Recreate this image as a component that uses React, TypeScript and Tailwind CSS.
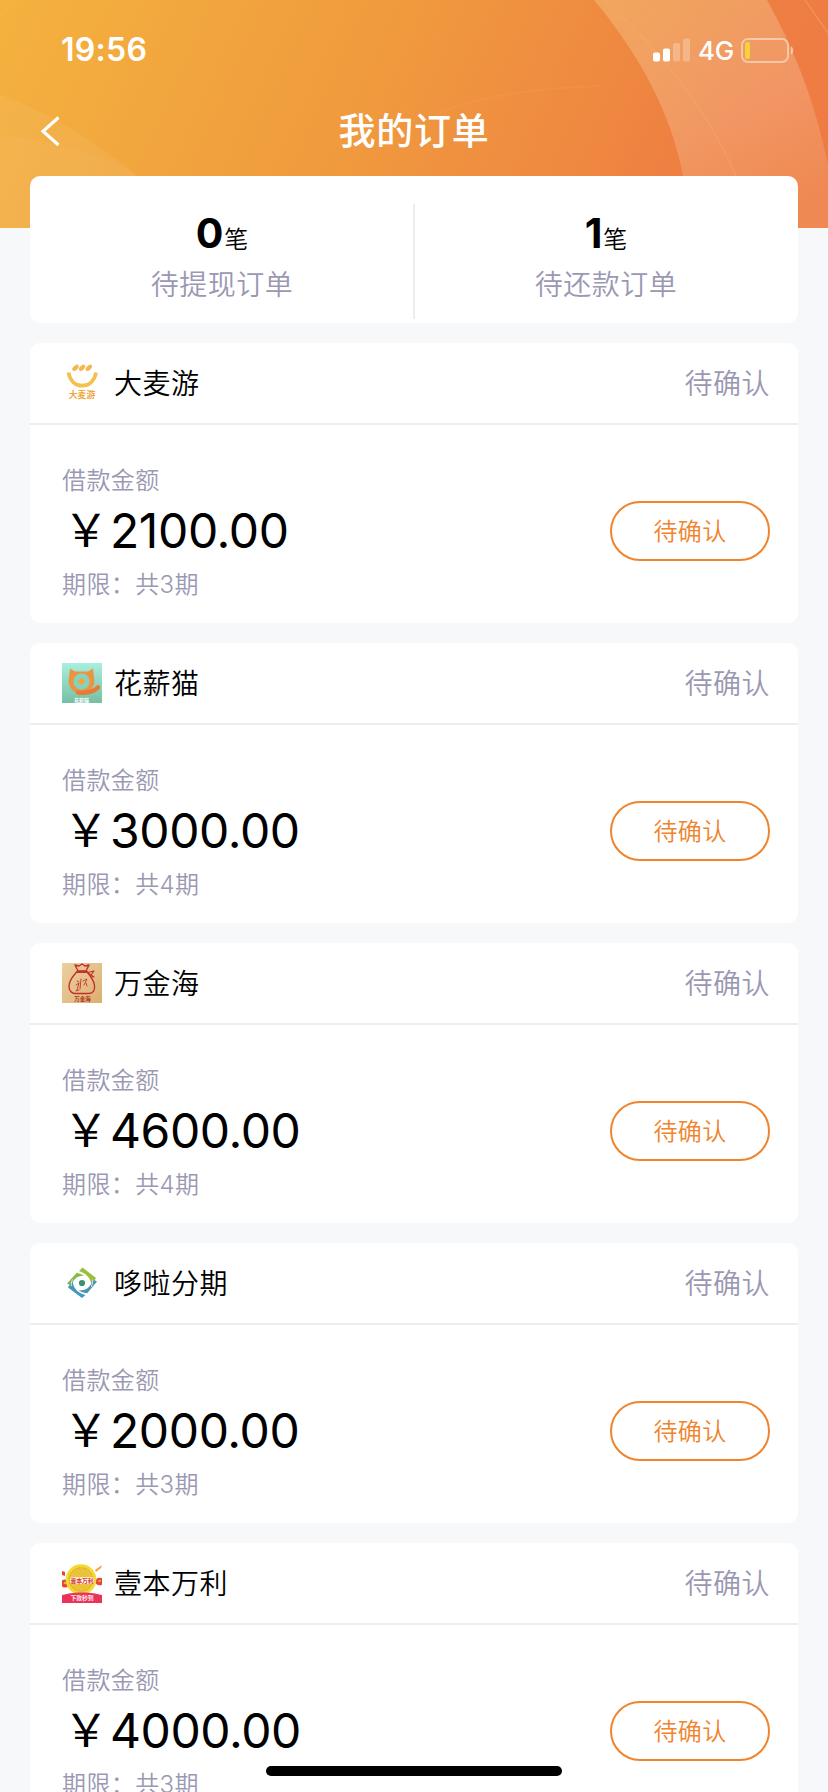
import React from 'react';

interface Order {
    id: number;
    name: string;
    amount: string;
    periods: number;
    logo: React.ReactNode;
}

const DamaiLogo = () => (
    <svg viewBox="0 0 40 40" className="w-10 h-10">
        <g fill="#f2b84b">
            <ellipse cx="13.5" cy="4.8" rx="3.8" ry="2.2" transform="rotate(-42 13.5 4.8)" />
            <ellipse cx="20" cy="4.8" rx="3.8" ry="2.2" transform="rotate(-42 20 4.8)" />
            <ellipse cx="26.800" cy="4.8" rx="3.8" ry="2.2" transform="rotate(-42 26.8 4.8)" />
        </g>
        <path d="M6.5 9.5C8 18 13.5 22.600 20.2 22.600S32.500 18 34 9.500" fill="none" stroke="#f2c14f" strokeWidth="3.800" />
        <text x="20" y="35" textAnchor="middle" fontSize="8.8" fontWeight="700" fill="#efa73a">大麦游</text>
    </svg>
);

const CatLogo = () => (
    <svg viewBox="0 0 40 40" className="w-10 h-10">
        <defs>
            <linearGradient id="cat-bg" x1="0" y1="0" x2="0" y2="1">
                <stop offset="0" stopColor="#a9efdf" />
                <stop offset="1" stopColor="#76bfa2" />
            </linearGradient>
        </defs>
        <rect width="40" height="40" fill="url(#cat-bg)" />
        <path d="M8 5.500l5 3h13l5-3 1 9c1 4 0 9-3 12-4 5-15 5-19 0-3-3-4-8-3-12z" fill="#eb9340" />
        <path d="M16 29.500c9 1 15 0 20-5" stroke="#ea7a38" strokeWidth="4.500" strokeLinecap="round" fill="none" />
        <circle cx="19.500" cy="18.500" r="8.500" fill="#86d3bd" />
        <circle cx="19.500" cy="18.500" r="8.500" fill="none" stroke="#dba05a" strokeWidth="1.200" />
        <path d="M19.500 14.500l2 2.300 2.500 1.700-2.500 1.400-2 2.600-2-2.600-2.500-1.400 2.500-1.700z" fill="#f2a53c" />
        <text x="19.500" y="38.500" textAnchor="middle" fontSize="5" fontWeight="700" fill="#ffffff">花薪猫</text>
    </svg>
);

const BagLogo = () => (
    <svg viewBox="0 0 40 40" className="w-10 h-10">
        <defs>
            <linearGradient id="bag-bg" x1="0" y1="0" x2="1" y2="1">
                <stop offset="0" stopColor="#ecd09e" />
                <stop offset=".55" stopColor="#e4bf88" />
                <stop offset="1" stopColor="#dcae6c" />
            </linearGradient>
        </defs>
        <rect width="40" height="40" fill="url(#bag-bg)" />
        <g fill="none" stroke="#c4302b" strokeWidth="1.400" strokeLinecap="round" strokeLinejoin="round">
            <path d="M16 8l-3-6 4 1 3-2 3 2 4-1-3 6z" />
            <path d="M15 8.500c-3 4-8 8-8 15 0 4 2.500 7 6 7h14c4 0 6-3 5.500-8C32 17 28 13 25 8.500z" />
            <path d="M15 9.500h11l6-1.500-3 4 3 2M26 10l5 4" strokeWidth="1.100" />
            <path d="M15 18l2 1M14 22l3-2-2 7M19 16l-1 10M21 18l4-2-3 6M24 20l1 3M14 28l3-1" strokeWidth=".9" />
        </g>
        <text x="20.500" y="38" textAnchor="middle" fontSize="5.500" fontWeight="700" fill="#b02c24">万金海</text>
    </svg>
);

const DuolaLogo = () => (
    <svg viewBox="0 0 40 40" className="w-10 h-10">
        <path d="M17 8L20.500 4.500L34 15C32 18 31 22 29.500 24C30 17 25.500 11 17 8Z" fill="#9bbf3b" />
        <path d="M5 20.500L15 9.500C18 10 21 11 23 13C16 12 11 16 9.500 23Z" fill="#86b84a" />
        <path d="M35 18.500L25 30.500C22 30.500 18 29 16 27.500C24 28 29 24 31 16.500Z" fill="#4a93b4" />
        <path d="M23.500 32L20 35L6 24.500C8 22 9 19 10.500 16.500C10.500 24 15 30 23.500 32Z" fill="#4398bd" />
        {/* light seams between the blades */}
        <path d="M10.500 16.500C9.500 19 9 21 9.500 23M23 13C20 11.500 18 10 15 9.500M31 16.500C30.500 20 30 22 29.500 24M16 27.500C19 29.500 22 30.500 25 30.500" fill="none" stroke="#ffffff" strokeWidth=".8" />
        <circle cx="20" cy="20" r="3.100" fill="#3c9270" />
    </svg>
);

const CoinLogo = () => (
    <svg viewBox="0 0 40 40" className="w-10 h-10">
        <g fill="#e2472f">
            <path d="M0 8l3 1v4l-3-1z" />
            <circle cx="3" cy="20.500" r="4" />
            <circle cx="37.500" cy="18.500" r="3.800" />
        </g>
        <circle cx="3" cy="20" r="1.300" fill="#f3a64a" />
        <circle cx="37.500" cy="18" r="1.300" fill="#f3a64a" />
        <path d="M33 7l7-5-1 3-5 4z" fill="#eda73e" />
        <circle cx="19" cy="16.500" r="15.300" fill="#f4d934" />
        <circle cx="19" cy="16.500" r="11.800" fill="#ecc23b" stroke="#cf9a2c" strokeWidth="1" strokeDasharray="1.500 1" />
        <rect x="8" y="14.200" width="24" height="6.500" rx="2" fill="#ffffff" opacity=".85" />
        <text x="20" y="20" textAnchor="middle" fontSize="5.800" fontWeight="700" fill="#d8323c">壹本万利</text>
        <path d="M0 40v-8c8-1.500 9-2.500 20-2.500S32 30.500 40 32v8z" fill="#e93358" />
        <text x="20" y="37.200" textAnchor="middle" fontSize="5.800" fontWeight="700" fill="#ffe7ec">下款秒到</text>
    </svg>
);

const ORDERS: Order[] = [
    { id: 1, name: '大麦游',   amount: '2100.00', periods: 3, logo: <DamaiLogo /> },
    { id: 2, name: '花薪猫',   amount: '3000.00', periods: 4, logo: <CatLogo /> },
    { id: 3, name: '万金海',   amount: '4600.00', periods: 4, logo: <BagLogo /> },
    { id: 4, name: '哆啦分期', amount: '2000.00', periods: 3, logo: <DuolaLogo /> },
    { id: 5, name: '壹本万利', amount: '4000.00', periods: 3, logo: <CoinLogo /> },
];

const SUMMARY = [
    { count: 0, label: '待提现订单' },
    { count: 1, label: '待还款订单' },
];

// Decorative arcs behind the header
const HeaderArt = () => (
    <svg viewBox="0 0 828 228" className="absolute inset-0 w-full h-full" fill="none">
        <defs>
            <linearGradient id="band" x1="640" y1="0" x2="740" y2="228" gradientUnits="userSpaceOnUse">
                <stop offset="0" stopColor="#f5d590" stopOpacity=".36" />
                <stop offset=".6" stopColor="#fbe6d0" stopOpacity=".23" />
                <stop offset="1" stopColor="#f8e0b0" stopOpacity=".14" />
            </linearGradient>
        </defs>
        <path d="M594 0C640 55 672 115 683 176L690 228H828V165C817 110 798 56 767 0Z" fill="url(#band)" />
        <path d="M0 95C50 112 100 145 137 176V228H0Z" fill="#ffffff" fillOpacity=".06" />
        <path d="M0 135C60 142 105 155 137 176V228H0Z" fill="#ffffff" fillOpacity=".03" />
        <path d="M604 0C660 50 705 105 736 176" stroke="#f6b070" strokeOpacity=".35" strokeWidth="1.500" />
        <path d="M805 0L828 33" stroke="#f6b070" strokeOpacity=".4" strokeWidth="1.500" />
        <path d="M440 112C490 94 540 88 600 86" stroke="#f6b070" strokeOpacity=".15" strokeWidth="2" />
        <path d="M0 14L20 0" stroke="#f8c060" strokeOpacity=".2" strokeWidth="2" />
    </svg>
);

const StatusBar = () => (
    <div className="relative flex h-[88px] items-start justify-between pl-[61px] pr-[34px] pt-[30px] text-white">
        <span className="text-[32px] leading-10 font-semibold tracking-[0.3px]">19:56</span>
        <div className="flex items-center h-10">
            <svg viewBox="0 0 37 24" className="w-[37px] h-6" fill="#ffffff">
                <rect x="0" y="14.500" width="7" height="9" rx="1.800" />
                <rect x="10" y="10.500" width="7" height="13" rx="1.800" />
                <rect x="20" y="5" width="7" height="18.500" rx="1.800" opacity=".25" />
                <rect x="30" y="0.500" width="7" height="23" rx="1.800" opacity=".25" />
            </svg>
            <span className="ml-2 w-9 pt-0.5 text-[26px] leading-10 font-[450] tracking-[-0.3px]">4G</span>
            <svg viewBox="0 0 53 25" className="ml-[7px] w-[53px] h-[25px]">
                <rect x="1" y="1" width="46" height="23" rx="6" fill="none" stroke="#ffffff" strokeOpacity=".45" strokeWidth="2" />
                <rect x="4" y="4" width="5" height="17" rx="2" fill="#f6d13c" />
                <path d="M50 8.500c3 1 3 7 0 8z" fill="#ffffff" fillOpacity=".5" />
            </svg>
        </div>
    </div>
);

const OrderCard = ({ order }: { order: Order }) => (
    <div className="h-[280px] shrink-0 rounded-[10px] bg-white">
        <div className="flex h-[82px] items-center border-b-2 border-[#ededf0] pl-8 pr-7">
            {order.logo}
            <span className="ml-3 pt-0.5 text-[28px] font-[350] tracking-[0.5px] text-black">{order.name}</span>
            <span className="ml-auto pt-0.5 text-[28px] font-[350] tracking-[0.5px] text-[#9a98b2]">待确认</span>
        </div>
        <div className="flex items-start justify-between pl-8 pr-7 pt-[38px]">
            <div>
                <p className="text-2xl leading-9 font-[350] tracking-[0.4px] text-[#9a98b2]">借款金额</p>
                <p className="mt-0.5 flex items-center text-5xl leading-[60px] text-black">
                    <span className="w-12 text-center text-[45px]">￥</span>
                    <span className="tracking-[-0.4px]">{order.amount}</span>
                </p>
                <p className="mt-1.5 text-2xl leading-9 font-[350] tracking-[0.4px] text-[#9a98b2]">期限：共{order.periods}期</p>
            </div>
            <button className="mt-[38px] h-[60px] w-40 rounded-full border-2 border-[#ef842c] pt-0.5 text-2xl font-[350] tracking-[0.4px] text-[#ef842c]">
                待确认
            </button>
        </div>
    </div>
);

const App: React.FC = () => {
    return (
        <div
            lang="zh-CN"
            className="relative h-[1792px] w-[828px] overflow-hidden bg-[#f6f8fa] font-['Inter','Noto_Sans_CJK_SC',sans-serif]"
        >
            <header className="relative h-[228px] bg-[linear-gradient(114deg,#f4b23e_0%,#f09a3e_44%,#ee7f42_82%,#ee7a44_100%)]">
                <HeaderArt />
                <StatusBar />
                <div className="relative flex h-[88px] items-center justify-center text-white">
                    <svg viewBox="0 0 20 30" className="absolute left-10 top-7 w-5 h-[30px]" fill="none">
                        <path d="M18.500 1.500L3 15.300L18.500 29" stroke="#ffffff" strokeWidth="3.200" />
                    </svg>
                    <h1 className="text-[37px] font-medium tracking-[0.8px]">我的订单</h1>
                </div>
            </header>

            <main className="relative -mt-[52px] flex flex-col gap-5 px-[30px]">
                <section className="flex h-[147px] rounded-[10px] bg-white">
                    {SUMMARY.map((item, i) => (
                        <div key={item.label} className="flex flex-1 flex-col items-center pt-[29px]">
                            <div className="flex items-baseline leading-[56px]">
                                <span className="text-[41px] font-bold text-black">{item.count}</span>
                                <span className="ml-px text-2xl font-[350] text-black">笔</span>
                            </div>
                            <span className="mt-1 text-[28px] leading-10 font-[350] tracking-[0.5px] text-[#9a98b2]">{item.label}</span>
                            {i === 0 && <span className="absolute left-[413px] top-7 h-[115px] w-0.5 bg-[#ededf0]" />}
                        </div>
                    ))}
                </section>
                {ORDERS.map((order) => (
                    <OrderCard key={order.id} order={order} />
                ))}
            </main>

            <div className="absolute bottom-4 left-[266px] h-2.5 w-[296px] rounded-full bg-black" />
        </div>
    );
};

export default App;
